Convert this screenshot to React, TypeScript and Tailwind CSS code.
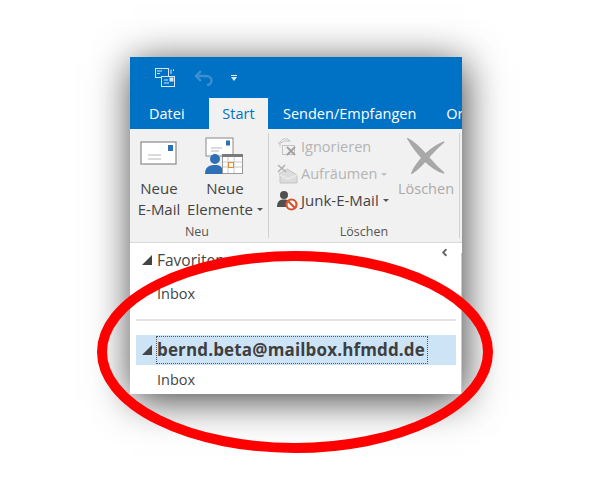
import { ChevronLeft } from "lucide-react";

const Caret = ({ light }: { light?: boolean }) => (
  <span className={`inline-block w-0 h-0 ml-[4px] mb-[2px] align-middle border-x-[3px] border-x-transparent border-t-[3px] ${light ? "border-t-[#c0c0c0]" : "border-t-[#555]"}`} />
);

const Triangle = () => (
  <svg width="10" height="10" viewBox="0 0 10 10" className="shrink-0">
    <path d="M10 0V10H0Z" fill="#444" />
  </svg>
);

function NewMailIcon() {
  return (
    <svg width="38" height="26" viewBox="0 0 38 26">
      <rect x="1" y="1" width="35" height="22" fill="#fff" stroke="#8a8a8a" strokeWidth="1.2" />
      <rect x="28" y="4" width="5" height="6" fill="#2f70b5" />
      <path d="M8 14H21M8 18H21" stroke="#b5b5b5" strokeWidth="1" />
    </svg>
  );
}

function NewItemsIcon() {
  return (
    <svg width="40" height="40" viewBox="0 0 40 40">
      <rect x="1" y="1" width="27" height="18" fill="#fff" stroke="#8a8a8a" />
      <rect x="21" y="3.500" width="4" height="5" fill="#2f70b5" />
      <path d="M6 11H17M6 14H14" stroke="#b5b5b5" />
      <circle cx="10" cy="22" r="5" fill="#2f70b5" />
      <path d="M0 37C0 30 4 28 10 28C16 28 18 30 18 37Z" fill="#2f70b5" />
      <rect x="17.500" y="18.500" width="20" height="18" fill="#fff" stroke="#999" />
      <rect x="17" y="17" width="21" height="3" fill="#7a7a7a" />
      <path d="M23 20V36M29 20V36M18 25H37M18 30H37" stroke="#c8c8c8" />
      <rect x="23.500" y="25.500" width="5" height="5" fill="#fff" stroke="#e58a2e" />
    </svg>
  );
}

function IgnoreIcon() {
  return (
    <svg width="21" height="20" viewBox="0 0 21 20" fill="none" className="shrink-0">
      <path d="M1 7L6 2H11L13 5" stroke="#c4c4c4" />
      <path d="M3 10V6L8 4H13" stroke="#c4c4c4" />
      <rect x="5.500" y="8.500" width="12" height="9" stroke="#c4c4c4" />
      <path d="M10 10L18 18M18 10L10 18" stroke="#a0a0a0" strokeWidth="1.800" />
    </svg>
  );
}

function CleanupIcon() {
  return (
    <svg width="21" height="20" viewBox="0 0 21 20" fill="none" className="shrink-0">
      <path d="M2 10L10 5L20 11V19H3V10Z" fill="#dcdcdc" stroke="#c4c4c4" />
      <path d="M3 11L11 15L20 11" stroke="#f4f4f4" />
      <path d="M1 1L9 8M8 1L1 8" stroke="#b0b0b0" strokeWidth="1.500" />
    </svg>
  );
}

function JunkIcon() {
  return (
    <svg width="21" height="21" viewBox="0 0 21 21" className="shrink-0">
      <circle cx="7" cy="5" r="4" fill="#505050" />
      <path d="M0 17C0 11 3 9.500 7 9.500C11 9.500 13 11 13 17Z" fill="#505050" />
      <circle cx="14.500" cy="14.500" r="5" fill="#fff" stroke="#d9532c" strokeWidth="2.200" />
      <path d="M11 11L18 18" stroke="#d9532c" strokeWidth="2.200" />
    </svg>
  );
}

function DeleteIcon() {
  return (
    <svg width="38" height="36" viewBox="0 0 38 36">
      <path d="M1 1C9 5 15 12 22 20C27 26 32 31 37 35C29 33 23 28 17 22C11 16 5 8 1 1Z" fill="#a8a8a8" stroke="#a8a8a8" strokeWidth="1.500" />
      <path d="M37 4C28 8 20 14 14 21C10 26 6 31 5 35C10 32 15 27 20 21C26 14 32 8 37 4Z" fill="#a8a8a8" stroke="#a8a8a8" strokeWidth="1.500" />
    </svg>
  );
}

function SendReceiveIcon() {
  return (
    <svg width="20" height="20" viewBox="0 0 20 20" fill="none" stroke="#d5e6f5">
      <rect x="0.500" y="0.500" width="13" height="9" fill="#0072c6" />
      <rect x="6.500" y="8.500" width="13" height="10" fill="#0072c6" />
      <path d="M16 1.500V6M18.500 1.500V3M9 12H13M9 15H14" />
      <rect x="15" y="10" width="3" height="3" fill="#d5e6f5" />
      <path d="M2 3H7M2 5.500H5" />
    </svg>
  );
}

function UndoIcon() {
  return (
    <svg width="20" height="16" viewBox="0 0 20 16" fill="none" stroke="#3d8fd0" strokeWidth="2.400">
      <path d="M2 6H12C15.500 6 17.500 8 17.500 10.500C17.500 13 15.500 15 13 15" />
      <path d="M7 1L2 6L7 11" />
    </svg>
  );
}

export default function App() {
  return (
    <div className="relative w-[600px] h-[500px] bg-white overflow-hidden font-['Open_Sans',sans-serif] pt-[57px] pl-[130px]">
      <div className="w-[332px] h-[337px] flex flex-col bg-white shadow-[2px_6px_38px_rgba(0,0,0,0.75)]">
        <div className="h-[72px] shrink-0 bg-[#0072c6] flex flex-col overflow-hidden">
          <div className="h-[41px] flex items-center pl-[25px]">
            <SendReceiveIcon />
            <span className="ml-[19px]"><UndoIcon /></span>
            <span className="ml-[17px] flex flex-col items-center gap-[1px]">
              <span className="w-[6px] h-[1px] bg-[#e0edf7]" />
              <span className="w-0 h-0 border-x-[3px] border-x-transparent border-t-[4px] border-t-[#e0edf7]" />
            </span>
          </div>
          <div className="h-[31px] flex items-start text-[14.5px] text-white whitespace-nowrap">
            <span className="w-[79px] shrink-0 pl-[19px] pt-[6px] leading-[20px]">Datei</span>
            <span className="w-[59px] h-full shrink-0 bg-[#f1f1f1] text-[#0072c6] text-center pt-[6px] leading-[20px]">Start</span>
            <span className="ml-[15px] shrink-0 pt-[6px] leading-[20px]">Senden/Empfangen</span>
            <span className="ml-[30px] pt-[6px] leading-[20px]">Or</span>
          </div>
        </div>

        <div className="h-[114px] shrink-0 bg-[#f1f1f1] border-b border-[#d8d8d8] flex pt-[4px] text-[15px] leading-[21px] text-[#444] whitespace-nowrap overflow-hidden">
          <div className="w-[139px] shrink-0 h-[105px] border-r border-[#d0d0d0] flex flex-col">
            <div className="flex h-[87px] shrink-0">
              <div className="w-[58px] flex flex-col items-center">
                <div className="h-[47px] flex items-end pb-[11px]"><NewMailIcon /></div>
                <span>Neue</span>
                <span>E-Mail</span>
              </div>
              <div className="w-[74px] flex flex-col items-center">
                <div className="h-[47px] flex items-start pt-[4px]"><NewItemsIcon /></div>
                <span>Neue</span>
                <span>Elemente<Caret /></span>
              </div>
            </div>
            <div className="text-center text-[12.5px] leading-[16px] mt-[4px] text-[#555] pr-[4px]">Neu</div>
          </div>

          <div className="w-[191px] shrink-0 h-[105px] border-r border-[#d0d0d0] flex flex-col">
            <div className="flex h-[87px] shrink-0">
              <div className="w-[127px] pl-[8px] flex flex-col">
                <div className="h-[27px] flex items-center gap-[3px] text-[#b4b4b4] text-[14.5px]"><IgnoreIcon /><span>Ignorieren</span></div>
                <div className="h-[27px] flex items-center gap-[3px] text-[#b4b4b4] text-[14.5px]"><CleanupIcon /><span>Aufräumen<Caret light /></span></div>
                <div className="h-[27px] flex items-center gap-[3px]"><JunkIcon /><span>Junk-E-Mail<Caret /></span></div>
              </div>
              <div className="flex flex-col items-center w-[60px] text-[#aaa] text-[14.5px] pt-[5px]">
                <DeleteIcon />
                <span className="mt-[4px]">Löschen</span>
              </div>
            </div>
            <div className="text-center text-[12.5px] leading-[16px] mt-[4px] text-[#555]">Löschen</div>
          </div>
        </div>

        <div className="flex-1 relative bg-white text-[14.5px] text-[#444] whitespace-nowrap">
          <div className="px-[6px] pt-[7px]">
            <div className="flex items-center h-[20px] pl-[6px] gap-[5px] text-[15.5px] leading-[20px]">
              <Triangle />
              Favoriten
            </div>
            <div className="pl-[21px] mt-[14px] leading-[20px]">Inbox</div>
            <div className="h-[2px] bg-[#e3e3e3] mt-[15px]" />
            <div className="mt-[14px] h-[30px] bg-[#cde4f7] flex items-center pl-[6px] gap-[4px]">
              <Triangle />
              <span className="h-[28px] pr-[2px] border border-dotted border-[#555] text-[17px] font-bold leading-[25px] tracking-[0.15px] text-[#3f3f3f]">bernd.beta@mailbox.hfmdd.de</span>
            </div>
            <div className="pl-[21px] mt-[5px] leading-[20px]">Inbox</div>
          </div>
          <div className="absolute right-[12px] top-[4px] text-[#666]">
            <ChevronLeft size={11} strokeWidth={4} />
          </div>
          <div className="absolute right-0 top-[10px] bottom-0 w-[1px] bg-[#c8c8c8]" />
        </div>
      </div>

      <svg width="600" height="500" viewBox="0 0 600 500" className="absolute inset-0" fill="none">
        <ellipse cx="295" cy="352" rx="193" ry="96" stroke="#ff0000" strokeWidth="10" />
      </svg>
    </div>
  );
}
